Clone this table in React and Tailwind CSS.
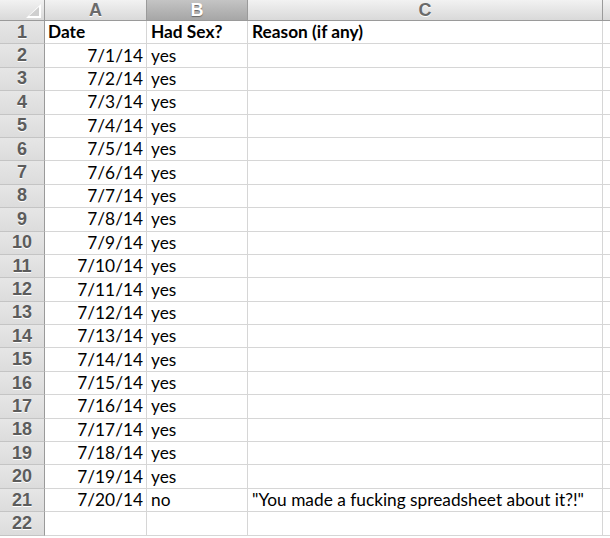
import React from "react";

const rows = [
  ["7/1/14", "yes", ""],
  ["7/2/14", "yes", ""],
  ["7/3/14", "yes", ""],
  ["7/4/14", "yes", ""],
  ["7/5/14", "yes", ""],
  ["7/6/14", "yes", ""],
  ["7/7/14", "yes", ""],
  ["7/8/14", "yes", ""],
  ["7/9/14", "yes", ""],
  ["7/10/14", "yes", ""],
  ["7/11/14", "yes", ""],
  ["7/12/14", "yes", ""],
  ["7/13/14", "yes", ""],
  ["7/14/14", "yes", ""],
  ["7/15/14", "yes", ""],
  ["7/16/14", "yes", ""],
  ["7/17/14", "yes", ""],
  ["7/18/14", "yes", ""],
  ["7/19/14", "yes", ""],
  ["7/20/14", "no", "\"You made a fucking spreadsheet about it?!\""],
  ["", "", ""],
];

const cellFont = { fontFamily: "Lato, 'Open Sans', sans-serif" };
const headFont = { fontFamily: "'Liberation Sans', Arial, sans-serif" };

const RowHead = ({ n }) => (
  <div
    className="w-[45px] shrink-0 flex items-center justify-center border-r border-r-[#9a9a9a] border-b border-b-[#c4c4c4] bg-gradient-to-b from-[#e6e6e6] to-[#dcdcdc] text-[18px] font-bold text-[#5c5c5c] [text-shadow:0_1px_0_#fff]"
    style={headFont}
  >
    {n}
  </div>
);

const Row = ({ n, cells, bold }) => (
  <div className="flex h-[23.4px]">
    <RowHead n={n} />
    <div
      className={`w-[102px] shrink-0 flex items-center border-r border-b border-[#d6d6d6] text-[17.3px] text-black ${
        bold ? "font-bold justify-start pl-[3px]" : "justify-end pr-[3px]"
      }`}
      style={cellFont}
    >
      {cells[0]}
    </div>
    <div
      className={`w-[101px] shrink-0 flex items-center pl-[4px] border-r border-b border-[#d6d6d6] text-[17.3px] text-black ${
        bold ? "font-bold" : ""
      }`}
      style={cellFont}
    >
      {cells[1]}
    </div>
    <div
      className={`w-[355px] shrink-0 flex items-center pl-[4px] border-r border-b border-[#d6d6d6] text-[17.3px] text-black whitespace-nowrap ${
        bold ? "font-bold" : ""
      }`}
      style={cellFont}
    >
      {cells[2]}
    </div>
    <div className="flex-1 border-b border-[#d6d6d6]" />
  </div>
);

const ColHead = ({ label, w, active }) => (
  <div
    className={`${w} shrink-0 h-full flex items-center justify-center border-r border-b border-[#9a9a9a] text-[18px] font-bold ${
      active
        ? "bg-gradient-to-b from-[#c4c4c4] to-[#a6a6a6] text-white [text-shadow:0_1px_1px_#666]"
        : "bg-gradient-to-b from-[#f2f2f2] to-[#d9d9d9] text-[#6a6a6a] [text-shadow:0_1px_0_#fff]"
    }`}
    style={headFont}
  >
    {label}
  </div>
);

export default function App() {
  return (
    <div className="w-[610px] h-[538px] overflow-hidden bg-white">
      <div className="flex h-[21px]">
        <div className="w-[45px] shrink-0 h-full border-r border-b border-[#9a9a9a] bg-gradient-to-b from-[#f2f2f2] to-[#d9d9d9] flex items-end justify-end pr-[3px] pb-[2px]">
          <svg width="15" height="14" viewBox="0 0 15 14">
            <polygon points="15,0 15,14 0,14" fill="#ffffff" />
            <polygon points="13,3 13,12 3,12" fill="#cfcfcf" />
          </svg>
        </div>
        <ColHead label="A" w="w-[102px]" />
        <ColHead label="B" w="w-[101px]" active />
        <ColHead label="C" w="w-[355px]" />
        <div className="flex-1 h-full border-b border-[#9a9a9a] bg-gradient-to-b from-[#f2f2f2] to-[#d9d9d9]" />
      </div>
      <Row n={1} cells={["Date", "Had Sex?", "Reason (if any)"]} bold />
      {rows.map((r, i) => (
        <Row key={i} n={i + 2} cells={r} />
      ))}
    </div>
  );
}
